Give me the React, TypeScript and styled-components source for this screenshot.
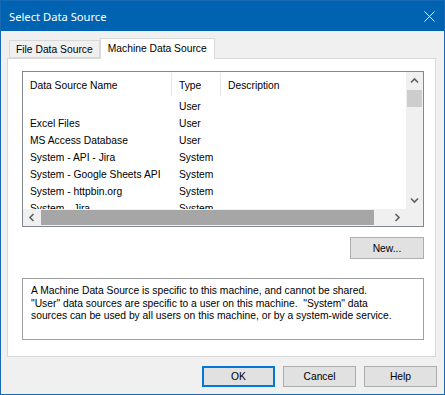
import React from "react";
import styled, { createGlobalStyle } from "styled-components";

const Global = createGlobalStyle`
  html, body { margin: 0; padding: 0; background: #f0f0f0; }
  body { font-family: "Liberation Sans", Arial, sans-serif; font-size: 10.3px; color: #000; }
  * { box-sizing: border-box; }
`;

const Window = styled.div`
  width: 445px;
  height: 395px;
  border: 1px solid #1769b5;
  background: #f0f0f0;
  display: flex;
  flex-direction: column;
`;

const TitleBar = styled.div`
  height: 30px;
  background: #0063b1;
  color: #fff;
  display: flex;
  align-items: center;
  justify-content: space-between;
  padding: 0 9px 0 8px;
  font-family: "Noto Sans", "Liberation Sans", sans-serif;
  font-size: 11.2px;
  flex: none;
`;

const Body = styled.div`
  flex: 1;
  display: flex;
  flex-direction: column;
  padding: 7px 7px 7px 6px;
`;

const TabStrip = styled.div`
  height: 20px;
  display: flex;
  align-items: flex-end;
  padding-left: 2px;
  position: relative;
  z-index: 1;
`;

const Tab = styled.div<{ $active?: boolean }>`
  height: ${(p) => (p.$active ? 21 : 18)}px;
  margin-bottom: ${(p) => (p.$active ? -1 : 0)}px;
  padding: ${(p) => (p.$active ? "0 7px 2px 7px" : "1px 6px 0 6px")};
  background: ${(p) => (p.$active ? "#fff" : "#f0f0f0")};
  border: 1px solid #d9d9d9;
  border-bottom: ${(p) => (p.$active ? "none" : "1px solid #d9d9d9")};
  display: flex;
  align-items: center;
  white-space: nowrap;
  & + & { border-left: ${(p) => (p.$active ? "1px solid #d9d9d9" : "none")}; }
`;

const Panel = styled.div`
  height: 299px;
  width: 429px;
  background: #fff;
  border: 1px solid #d9d9d9;
  padding: 12px 11px 0 14px;
  display: flex;
  flex-direction: column;
`;

const ListView = styled.div`
  height: 156px;
  border: 1px solid #828790;
  display: grid;
  grid-template-columns: 1fr 17px;
  grid-template-rows: 1fr 17px;
`;

const ListContent = styled.div`
  overflow: hidden;
  background: #fff;
`;

const cols = "149px 49px 1fr";

const HeaderRow = styled.div`
  height: 25px;
  display: grid;
  grid-template-columns: ${cols};
`;

const HeaderCell = styled.div<{ $sep?: boolean }>`
  display: flex;
  align-items: center;
  padding: 2px 0 0 7px;
  border-right: ${(p) => (p.$sep ? "1px solid #e5e5e5" : "none")};
  margin: 1px 0 1px 0;
  white-space: nowrap;
`;

const Row = styled.div`
  height: 17px;
  display: grid;
  grid-template-columns: ${cols};
  align-items: center;
`;

const Cell = styled.div`
  padding: 2px 0 0 7px;
  white-space: nowrap;
  overflow: hidden;
`;

const VScroll = styled.div`
  background: #f0f0f0;
  display: flex;
  flex-direction: column;
`;

const HScroll = styled.div`
  background: #f0f0f0;
  display: flex;
`;

const Corner = styled.div`
  background: #f0f0f0;
`;

const ArrowBtn = styled.div`
  width: 17px;
  height: 17px;
  flex: none;
  display: flex;
  align-items: center;
  justify-content: center;
`;

const VThumb = styled.div`
  margin: 1px 1px 0 1px;
  height: 17px;
  background: #cdcdcd;
`;

const Track = styled.div`
  flex: 1;
`;

const HThumb = styled.div`
  width: 333px;
  margin: 1px 0 1px 1px;
  background: #a6a6a6;
`;

const ButtonBase = styled.button<{ $default?: boolean }>`
  width: 73px;
  height: 21px;
  font-family: inherit;
  font-size: 10.3px;
  color: #000;
  background: #e1e1e1;
  border: ${(p) => (p.$default ? "2px solid #0078d7" : "1px solid #adadad")};
  padding: 0;
  margin: 0;
  display: flex;
  align-items: center;
  justify-content: center;
`;

const NewRow = styled.div`
  display: flex;
  justify-content: flex-end;
  margin-top: 10px;
`;

const NewButton = styled(ButtonBase)`
  width: 74px;
  height: 22px;
`;

const DescBox = styled.div`
  margin-top: 19px;
  height: 62px;
  border: 1px solid #a0a0a0;
  padding: 6px 8px 4px 8px;
  line-height: 12.7px;
  white-space: pre;
`;

const ButtonRow = styled.div`
  display: flex;
  justify-content: flex-end;
  gap: 8px;
  margin-top: 9px;
`;

const Chevron = ({ dir }: { dir: "up" | "down" | "left" | "right" }) => {
  const rot = { up: 0, right: 90, down: 180, left: 270 }[dir];
  return (
    <svg width="9" height="9" viewBox="0 0 9 9" style={{ transform: `rotate(${rot}deg)` }}>
      <path d="M1 6.5 L4.5 3 L8 6.5" fill="none" stroke="#606060" strokeWidth="1.6" />
    </svg>
  );
};

const rows: [string, string][] = [
  ["", "User"],
  ["Excel Files", "User"],
  ["MS Access Database", "User"],
  ["System - API - Jira", "System"],
  ["System - Google Sheets API", "System"],
  ["System - httpbin.org", "System"],
  ["System - Jira", "System"],
];

export default function App() {
  return (
    <>
      <Global />
      <Window>
        <TitleBar>
          <span>Select Data Source</span>
          <svg width="11" height="11" viewBox="0 0 11 11">
            <path d="M0.5 0.5 L10.5 10.5 M10.5 0.5 L0.5 10.5" stroke="#fff" strokeWidth="1" />
          </svg>
        </TitleBar>
        <Body>
          <TabStrip>
            <Tab>File Data Source</Tab>
            <Tab $active>Machine Data Source</Tab>
          </TabStrip>
          <Panel>
            <ListView>
              <ListContent>
                <HeaderRow>
                  <HeaderCell $sep>Data Source Name</HeaderCell>
                  <HeaderCell $sep>Type</HeaderCell>
                  <HeaderCell>Description</HeaderCell>
                </HeaderRow>
                {rows.map(([n, t], i) => (
                  <Row key={i}>
                    <Cell>{n}</Cell>
                    <Cell>{t}</Cell>
                    <Cell />
                  </Row>
                ))}
              </ListContent>
              <VScroll>
                <ArrowBtn><Chevron dir="up" /></ArrowBtn>
                <VThumb />
                <Track />
                <ArrowBtn><Chevron dir="down" /></ArrowBtn>
              </VScroll>
              <HScroll>
                <ArrowBtn><Chevron dir="left" /></ArrowBtn>
                <HThumb />
                <Track />
                <ArrowBtn><Chevron dir="right" /></ArrowBtn>
              </HScroll>
              <Corner />
            </ListView>
            <NewRow>
              <NewButton>New...</NewButton>
            </NewRow>
            <DescBox>
              {"A Machine Data Source is specific to this machine, and cannot be shared.\n\"User\" data sources are specific to a user on this machine.  \"System\" data\nsources can be used by all users on this machine, or by a system-wide service."}
            </DescBox>
          </Panel>
          <ButtonRow>
            <ButtonBase $default>OK</ButtonBase>
            <ButtonBase>Cancel</ButtonBase>
            <ButtonBase>Help</ButtonBase>
          </ButtonRow>
        </Body>
      </Window>
    </>
  );
}
